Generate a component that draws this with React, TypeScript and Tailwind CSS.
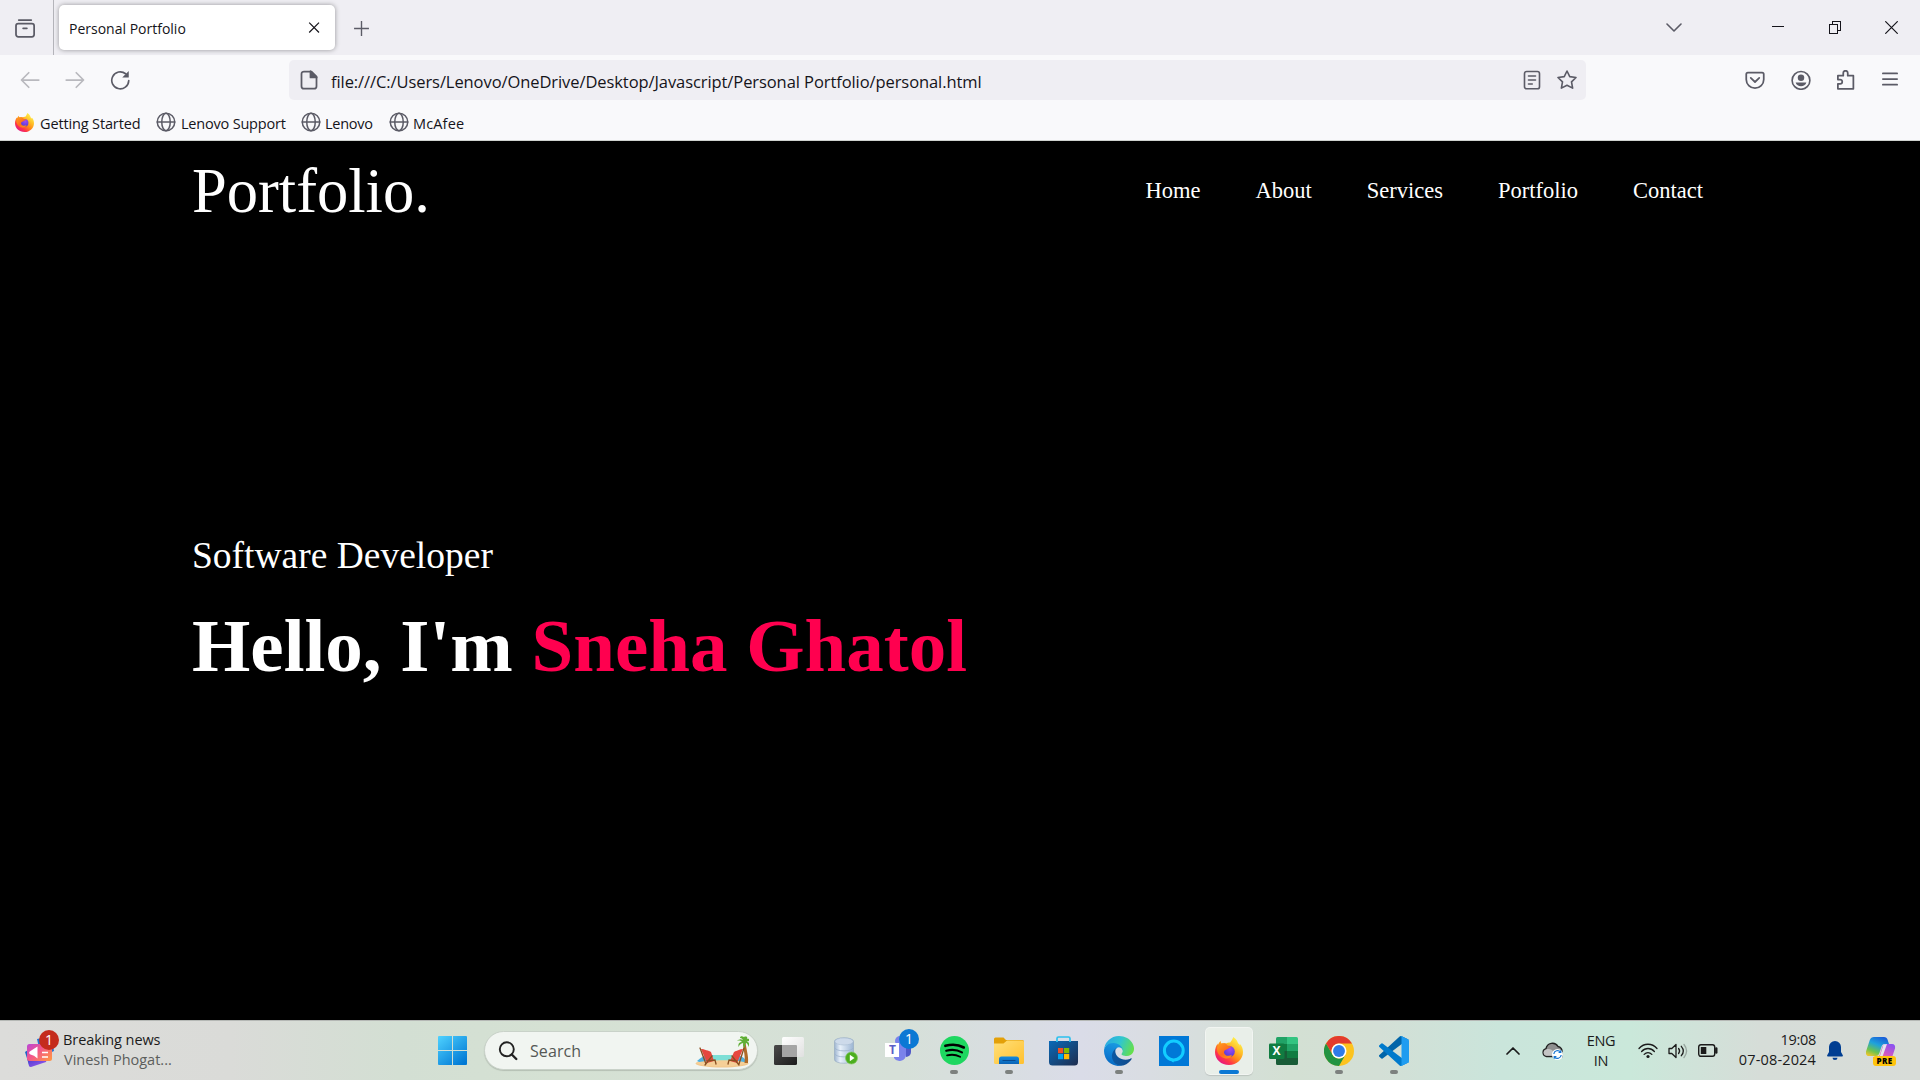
import type { ReactNode } from 'react';

type IconProps = { className?: string };

function Line({ className = '', children, w = 1.1 }: { className?: string; children: ReactNode; w?: number }) {
  return (
    <svg viewBox="0 0 16 16" fill="none" stroke="currentColor" strokeWidth={w} strokeLinecap="round" strokeLinejoin="round" className={`size-5 shrink-0 ${className}`}>
      {children}
    </svg>
  );
}

function Globe() {
  return (
    <Line w={1.2} className="text-[#5b5b66]">
      <circle cx="8" cy="8" r="7" />
      <ellipse cx="8" cy="8" rx="3.4" ry="7" />
      <path d="M1 8h14" />
    </Line>
  );
}

function Firefox({ className = '', id }: IconProps & { id: string }) {
  return (
    <svg viewBox="0 0 28 28" className={`shrink-0 ${className}`}>
      <defs>
        <linearGradient id={`${id}-o`} x1="0.85" y1="0.1" x2="0.2" y2="0.95">
          <stop offset="0" stopColor="#fff44f" />
          <stop offset="0.3" stopColor="#ffc02a" />
          <stop offset="0.55" stopColor="#ff8a16" />
          <stop offset="0.78" stopColor="#ff3647" />
          <stop offset="1" stopColor="#e31587" />
        </linearGradient>
        <linearGradient id={`${id}-f`} x1="0" y1="0" x2="0.8" y2="1">
          <stop offset="0" stopColor="#ffa01c" />
          <stop offset="0.6" stopColor="#ff6a1e" />
          <stop offset="1" stopColor="#ff8f1a" />
        </linearGradient>
        <radialGradient id={`${id}-p`} cx="0.6" cy="0.3" r="0.8">
          <stop offset="0" stopColor="#a44bf0" />
          <stop offset="0.6" stopColor="#6a3fe0" />
          <stop offset="1" stopColor="#4a3ec0" />
        </radialGradient>
      </defs>
      <path d="M18.2 0c3 1.8 4.3 4.3 4.9 6.5 1 .4 1.600 1.200 1.900 2 .2-.5.300-1 .300-1.500C27 9.500 28 12 28 15c0 7.200-6.200 13-14 13S0 22.400 0 15.200C0 11.300 1.300 8.500 2.600 6.500c0 .8.100 1.300.3 1.700C3.500 6.400 4.500 5 5.800 4c0 1 .1 2 .700 2.700 1.400-.6 3-.7 4.500-.300 1.500-.700 3-1.200 4.200-.900C16.300 4 17.700 2.300 18.200 0z" fill={`url(#${id}-o)`} />
      <circle cx="14" cy="14.500" r="5.800" fill={`url(#${id}-p)`} />
      <path d="M2.900 8.200 5.800 6.800c1.600-.600 3.500-.600 5.200 0 1 .900 1.700 2 2.500 2.400h2.700c0 1-1.300 1.800-3.100 2.300-.600.900-1.300 1-2.100 1.300-1.600.500-2.400 1.800-1.800 3.400.500 1.400 1.900 2.600 3.800 2.600 1.500 0 2.700-.700 4-.600-1.100 2.300-3.700 3.600-6.500 3.200C6.600 20.900 2.300 17.500 2 12.500c0-1.700.3-3.200.9-4.300z" fill={`url(#${id}-f)`} />
    </svg>
  );
}

function WindowsLogo() {
  return (
    <svg viewBox="0 0 29 29" className="size-[29px] shrink-0">
      <defs>
        <linearGradient id="win" gradientUnits="userSpaceOnUse" x1="0" y1="0" x2="24" y2="29">
          <stop offset="0" stopColor="#4fd2ff" />
          <stop offset="1" stopColor="#0078d4" />
        </linearGradient>
      </defs>
      <path fill="url(#win)" d="M1 0h13v14H0V1a1 1 0 0 1 1-1zM15 0h13a1 1 0 0 1 1 1v13H15zM0 15h14v14H1a1 1 0 0 1-1-1zM15 15h14v13a1 1 0 0 1-1 1H15z" />
    </svg>
  );
}

function NewsIcon() {
  return (
    <svg viewBox="0 0 34 37" className="h-[37px] w-[34px] shrink-0">
      <defs>
        <linearGradient id="news" x1="0" y1="0" x2="1" y2="0.8">
          <stop offset="0" stopColor="#b846d8" />
          <stop offset="0.45" stopColor="#f2558c" />
          <stop offset="1" stopColor="#ff9048" />
        </linearGradient>
        <linearGradient id="newsback" x1="0" y1="0" x2="1" y2="1">
          <stop offset="0" stopColor="#4a3bd0" />
          <stop offset="1" stopColor="#a45cf0" />
        </linearGradient>
      </defs>
      <path d="M12 8l14-3 3 15-13 6z" fill="#2472d4" />
      <path d="M0 21l3-2 4 14-3 1z" fill="#1e62c8" />
      <path d="M3 29l19-1-1 3L6 36a2 2 0 0 1-2-1z" fill="url(#newsback)" />
      <rect x="2" y="13" width="25" height="17" rx="2.500" fill="url(#news)" />
      <path d="M12.500 15.500v12L9 24.800l-3.500-1.300c-1.800-1-1.800-2.800 0-3.500z" fill="#fff" />
      <path d="M17 21.500h6M17 26h6" stroke="#fff" strokeWidth="1.600" />
    </svg>
  );
}

function BeachArt() {
  return (
    <svg viewBox="0 0 54 32" className="h-8 w-[54px] shrink-0">
      <ellipse cx="27" cy="27.500" rx="26.500" ry="4" fill="#f2c88e" />
      <path d="M2 25c4-4 8-6 13-6h25c5 0 9 2 12 7-7 2-12-1-25-1S8 28 2 25z" fill="#4fb0e0" />
      <path d="M18 19h20l3 6c-8 2-18 2-26 0z" fill="#7ddfd6" />
      <path d="M1 27c10-3 40-4 51 0-10 4.500-42 4.500-51 0z" fill="#f5cf97" />
      <path d="M48.500 6c-1 6 2 12 1 21h3.500c.8-8-2-14-2.500-21z" fill="#b06a28" />
      <path d="M50 6c-3-4-6-3-8-1 3-1 4 0 5 1-3 0-4 2-3.500 5 1.500-3 3-4 5-4-1 2 0 4 1.500 5 0-2 0-4 1-5 1 0 2 2 3 4 1-4-1-5-2-6 1 0 2 0 3 1 0-3-2-4-3-3 1-2-1-3-3-2-2-1-4-1-4 1 2 0 3 1 3 4z" fill="#5fae35" />
      <path d="M6 13c3 0 8 2 10 3l3 9-7 2z" fill="#e6473f" />
      <path d="M48 13c-3 0-7 2-9 3l-4 9 7 2z" fill="#e6473f" />
      <g fill="none" stroke="#8a4f20" strokeWidth="1.300" strokeLinecap="round">
        <path d="M5 12l6 16M12 25l8-1 1 4M17 20l-7 9" />
        <path d="M49 12l-5 16M42 25l-8-1-1 4M37 20l7 9" />
      </g>
    </svg>
  );
}

function TaskView() {
  return (
    <svg viewBox="0 0 30 28" className="h-7 w-[30px]">
      <defs>
        <linearGradient id="tvd" x1="0" y1="0" x2="1" y2="1"><stop offset="0" stopColor="#4a4a4a" /><stop offset="1" stopColor="#1c1c1c" /></linearGradient>
        <linearGradient id="tvl" x1="0" y1="0" x2="1" y2="1"><stop offset="0" stopColor="#fff" /><stop offset="1" stopColor="#e0e0e0" /></linearGradient>
      </defs>
      <rect x="0" y="8" width="23" height="20" rx="1.500" fill="url(#tvd)" />
      <rect x="8" y="0" width="22" height="20" rx="1.500" fill="url(#tvl)" />
      <path d="M8 8h14a1 1 0 0 1 1 1v11H9a1 1 0 0 1-1-1z" fill="#a5a5a5" />
    </svg>
  );
}

function Database() {
  return (
    <svg viewBox="0 0 24 28" className="h-7 w-6">
      <defs><linearGradient id="dbg" x1="0" x2="1" y1="0" y2="0"><stop offset="0" stopColor="#9db4d0" /><stop offset="0.3" stopColor="#e8f1fa" /><stop offset="1" stopColor="#9cb5d3" /></linearGradient></defs>
      <path d="M.5 4.500C.5-.5 19.500-.5 19.500 4.500v18c0 5-19 5-19 0z" fill="url(#dbg)" stroke="#93a8c0" strokeWidth=".6" />
      <ellipse cx="10" cy="4.500" rx="9.200" ry="3.500" fill="#cddaea" stroke="#a3b6cc" strokeWidth=".5" />
      <path d="M.5 10.500c1 4.500 18 4.500 19 0M.5 16.500c1 4.500 18 4.500 19 0" fill="none" stroke="#9db2cb" strokeWidth=".8" />
      <circle cx="17.500" cy="21" r="6" fill="#4cae1e" stroke="#7fc95a" strokeWidth=".7" />
      <path d="M15.800 17.800v6.400l4.700-3.200z" fill="#fff" />
    </svg>
  );
}

function Teams() {
  return (
    <span className="relative block h-8 w-[34px]">
      <svg viewBox="0 0 34 32" className="h-8 w-[34px]">
        <circle cx="22" cy="8" r="4" fill="#5059c9" />
        <path d="M19 13h7v9a5 5 0 0 1-5 5z" fill="#5059c9" />
        <circle cx="15" cy="11" r="5" fill="#7b83eb" />
        <path d="M9 15h12v10a6.500 6.500 0 0 1-12 3z" fill="#7b83eb" />
        <rect x="0" y="13" width="14" height="14" fill="#fff" />
      </svg>
      <span className="absolute left-0 top-[13px] w-[15px] text-center text-[12px] font-bold leading-[14px] text-[#5b5fc7]">T</span>
      <span className="absolute -top-[1px] left-[14px] flex size-5 items-center justify-center rounded-full bg-[#0b78d4] text-[14px] leading-none text-white">1</span>
    </span>
  );
}

function Spotify() {
  return (
    <svg viewBox="0 0 28 28" className="size-[29px]">
      <circle cx="14" cy="14" r="14" fill="#1ed760" />
      <g fill="none" stroke="#000" strokeLinecap="round">
        <path d="M5.200 9.500c6-1.700 12.800-1.200 17.800 1.600" strokeWidth="2.500" />
        <path d="M6 14.300c5.200-1.400 10.700-.9 15.200 1.500" strokeWidth="2.100" />
        <path d="M6.800 18.700c4.300-1.100 8.800-.7 12.600 1.300" strokeWidth="1.800" />
      </g>
    </svg>
  );
}

function Explorer() {
  return (
    <svg viewBox="0 0 30 27" className="h-[27px] w-[30px]">
      <defs>
        <linearGradient id="exf" x1="0" y1="0" x2="1" y2="1"><stop offset="0" stopColor="#ffe07a" /><stop offset="1" stopColor="#ffc02e" /></linearGradient>
        <linearGradient id="exb" x1="0" y1="0" x2="0" y2="1"><stop offset="0" stopColor="#128be0" /><stop offset="1" stopColor="#0a62b5" /></linearGradient>
      </defs>
      <path d="M0 2a1.500 1.500 0 0 1 1.500-1.500h8L12 3h16.500A1.500 1.500 0 0 1 30 4.500V10H0z" fill="#e3a008" />
      <path d="M0 6.500h9.500L13 3.500h15.500A1.500 1.500 0 0 1 30 5v20.500a1.500 1.500 0 0 1-1.500 1.500h-27A1.500 1.500 0 0 1 0 25.500z" fill="url(#exf)" />
      <path d="M5 27v-5a2.500 2.500 0 0 1 2.500-2.500h15A2.500 2.500 0 0 1 25 22v5z" fill="url(#exb)" />
      <path d="M9 23.500h12" stroke="#07498f" strokeWidth="1.200" strokeLinecap="round" />
    </svg>
  );
}

function Store() {
  return (
    <svg viewBox="0 0 29 30" className="h-[30px] w-[29px]">
      <defs><linearGradient id="stg" x1="0" y1="0" x2="1" y2="1"><stop offset="0" stopColor="#0a6ab8" /><stop offset="1" stopColor="#1e2c4e" /></linearGradient></defs>
      <path d="M0 5h29v21a3.500 3.500 0 0 1-3.500 3.500h-22A3.500 3.500 0 0 1 0 26z" fill="url(#stg)" />
      <path d="M8 6V2.500A1.500 1.500 0 0 1 9.500 1h10A1.500 1.500 0 0 1 21 2.500V6" fill="none" stroke="#2cc0ee" strokeWidth="1.700" />
      <path d="M9 12h5.200v5.200H9z" fill="#f25022" /><path d="M15 12h5.200v5.200H15z" fill="#7fba00" />
      <path d="M9 18h5.200v5.200H9z" fill="#00a4ef" /><path d="M15 18h5.200v5.200H15z" fill="#ffb900" />
    </svg>
  );
}

function Edge() {
  return (
    <svg viewBox="0 0 256 256" className="size-[30px]">
      <defs>
        <linearGradient id="ed1" x1="0" y1="0.5" x2="1" y2="0.5"><stop offset="0" stopColor="#0c59a4" /><stop offset="1" stopColor="#114a8b" /></linearGradient>
        <linearGradient id="ed2" x1="0.6" y1="0" x2="0.3" y2="1"><stop offset="0" stopColor="#1b9de2" /><stop offset="0.6" stopColor="#0f7cd3" /><stop offset="1" stopColor="#0667c0" /></linearGradient>
        <linearGradient id="ed3" x1="0" y1="0.3" x2="1" y2="0.6"><stop offset="0" stopColor="#2aa8e4" /><stop offset="0.5" stopColor="#30c6cf" /><stop offset="1" stopColor="#66e04a" /></linearGradient>
      </defs>
      <path fill="url(#ed1)" d="M231 190.500c-3.400 1.800-6.900 3.300-10.500 4.700a101.900 101.900 0 0 1-35.900 6.400c-47.300 0-88.500-32.500-88.500-74.300a31.500 31.500 0 0 1 16.400-27.300c-42.800 1.800-53.800 46.400-53.800 72.500 0 74 68.100 81.400 82.800 81.400 7.900 0 19.800-2.300 27-4.600l1.300-.4a128.300 128.300 0 0 0 66.600-52.800 4 4 0 0 0-5.400-5.600z" />
      <path fill="url(#ed2)" d="M105.700 241.400A79.200 79.200 0 0 1 83 220.100a80.700 80.700 0 0 1 29.500-120c3.200-1.500 8.500-4.100 15.600-4a32.400 32.400 0 0 1 25.700 13 31.900 31.900 0 0 1 6.300 18.700c0-.200 24.500-79.600-80-79.600-43.900 0-80 41.700-80 78.200a130.200 130.200 0 0 0 12.100 56 128 128 0 0 0 156.400 67 75.500 75.500 0 0 1-62.800-8z" />
      <path fill="url(#ed3)" d="M152.300 148.900c-.9 1-3.400 2.500-3.400 5.600 0 2.600 1.700 5.200 4.800 7.300 14.400 10.100 41.600 8.700 41.700 8.700a59.600 59.600 0 0 0 30.300-8.300 61.400 61.400 0 0 0 30.400-52.900c.3-22.400-8-37.300-11.300-43.900C223.500 23.900 177.700 0 128 0A128 128 0 0 0 0 126.200c.5-36.500 36.800-66 80-66 3.500 0 23.500.3 42 10.100 16.300 8.600 24.900 18.900 30.800 29.200 6.200 10.700 7.300 24.100 7.300 29.500 0 5.300-2.700 13.300-7.800 19.900z" />
    </svg>
  );
}

function Alexa() {
  return (
    <svg viewBox="0 0 30 30" className="size-[30px]">
      <rect width="30" height="30" fill="#0078d7" />
      <circle cx="14.800" cy="14.500" r="9.400" fill="none" stroke="#12cdff" strokeWidth="3" />
      <path d="M12 23h3.200c0 1.200-.3 2.300-.8 3.500-1.400-.5-2.400-1.500-2.400-3.500z" fill="#12cdff" />
    </svg>
  );
}

function Excel() {
  return (
    <span className="relative block h-7 w-[29px]">
      <svg viewBox="0 0 29 28" className="h-7 w-[29px]">
        <path d="M8.500 0H18v7H7V1.500A1.500 1.500 0 0 1 8.500 0z" fill="#21a366" />
        <path d="M18 0h9.500A1.500 1.500 0 0 1 29 1.500V7H18z" fill="#33c481" />
        <path d="M7 7h11v7H7z" fill="#107c41" /><path d="M18 7h11v7H18z" fill="#21a366" />
        <path d="M7 14h11v7H7z" fill="#185c37" /><path d="M18 14h11v7H18z" fill="#107c41" />
        <path d="M7 21h22v5.500a1.500 1.500 0 0 1-1.500 1.500h-19A1.500 1.500 0 0 1 7 26.500z" fill="#185c37" />
        <rect x="0" y="6.500" width="15.500" height="15.500" rx="1.300" fill="#107c41" />
      </svg>
      <span className="absolute left-0 top-[7px] w-[15px] text-center text-[12px] font-bold leading-[14px] text-white">X</span>
    </span>
  );
}

function Chrome() {
  return (
    <svg viewBox="0 0 48 48" className="size-[30px]">
      <circle cx="24" cy="24" r="24" fill="#fcc31e" />
      <path d="M3.200 12A24 24 0 0 1 44.800 12H24a12 12 0 0 0-10.400 18z" fill="#e33b2e" />
      <path d="M3.200 12A24 24 0 0 0 24 48l10.400-18A12 12 0 0 1 13.600 30z" fill="#229342" />
      <circle cx="24" cy="24" r="12" fill="#fff" />
      <circle cx="24" cy="24" r="9.500" fill="#2f7be8" />
    </svg>
  );
}

function VsCode() {
  return (
    <svg viewBox="0 0 100 100" className="size-[30px]">
      <path d="M96.500 10.600 75.900.7a6.200 6.200 0 0 0-7.100 1.200L1.300 63.400a4.200 4.200 0 0 0 0 6.100l5.500 5c1.500 1.400 3.700 1.500 5.300.3L93.500 13.200c2.700-2.100 6.600-.100 6.600 3.300v-.200c0-2.500-1.400-4.700-3.600-5.700z" fill="#0065a9" />
      <path d="M96.500 89.400 75.900 99.300a6.200 6.200 0 0 1-7.100-1.200L1.300 36.600a4.200 4.200 0 0 1 0-6.100l5.500-5a4.200 4.200 0 0 1 5.300-.3l81.400 61.600c2.700 2.100 6.600.1 6.600-3.300v.200c0 2.500-1.400 4.700-3.600 5.700z" fill="#007acc" />
      <path d="M75.900 99.300a6.200 6.200 0 0 1-7.100-1.200c2.300 2.300 6.200.7 6.200-2.600V4.500c0-3.300-3.900-4.900-6.200-2.600A6.200 6.200 0 0 1 75.900.7l20.600 9.900a6.200 6.200 0 0 1 3.500 5.600v67.600c0 2.400-1.400 4.600-3.500 5.600z" fill="#1f9cf0" />
    </svg>
  );
}

function Copilot() {
  return (
    <span className="relative block h-[30px] w-[31px] shrink-0">
      <svg viewBox="0 0 31 30" className="h-[30px] w-[31px]">
        <defs>
          <linearGradient id="cpa" x1="0.7" y1="0" x2="0.2" y2="1"><stop offset="0" stopColor="#1a5fd8" /><stop offset="0.4" stopColor="#1ea2dc" /><stop offset="0.75" stopColor="#6cc34e" /><stop offset="1" stopColor="#e8c52c" /></linearGradient>
          <linearGradient id="cpb" x1="0.8" y1="0" x2="0.2" y2="1"><stop offset="0" stopColor="#8a52f0" /><stop offset="0.5" stopColor="#d158c4" /><stop offset="1" stopColor="#ff8a5a" /></linearGradient>
        </defs>
        <path d="M8 1h10c2 0 3 1 3.500 2.500L23 8h-4c-2 0-3 1-3.600 3l-2 6c-.6 2-1.500 3-3.400 3H3c-2.500 0-3.600-2-3-4.500L3.800 4C4.500 2 6 1 8 1z" fill="url(#cpa)" />
        <path d="M20 8h6c2.500 0 3.600 2 3 4.500L25.500 23c-.6 2-2 3-4 3H11c-2 0-3-1-3.500-3l-.5-2h3.500c2 0 3-1 3.600-3l2.200-7C17 9 18 8 20 8z" fill="url(#cpb)" />
        <path d="M17.500 8.500 21 8l-5 14-5 .5c2-.7 2.600-1.500 3.100-3z" fill="#e6e6ee" />
      </svg>
      <span className="absolute left-[7px] top-[20px] flex h-[10px] w-[23px] items-center justify-center rounded-[3px] bg-[#ffc40d] text-[8px] font-extrabold leading-none tracking-[0.4px] text-black">PRE</span>
    </span>
  );
}

function AppSlot({ children, running = false, active = false }: { children: ReactNode; running?: boolean; active?: boolean }) {
  return (
    <div className="relative flex h-full w-[55px] items-center justify-center">
      {active ? <div className="flex size-12 items-center justify-center rounded-[5px] border border-white/40 bg-[#e9efe9] shadow-[0_1px_1px_rgba(0,0,0,0.12)]">{children}</div> : children}
      {running && <span className="absolute bottom-[6px] left-6 h-1 w-2 rounded-full bg-[#7d817f]" />}
      {active && <span className="absolute bottom-[6px] left-[18px] h-1 w-5 rounded-full bg-[#0b78d4]" />}
    </div>
  );
}

function TabBar() {
  return (
    <div className="flex h-[55px] bg-[#efeef3] text-[#5b5b66]">
      <div className="flex w-[54px] items-center border-r border-[#b4b4ba] pl-[15px]">
        <Line w={1.4} className="mt-[1px]">
          <rect x=".8" y="4.400" width="14.500" height="10.600" rx="1.800" />
          <path d="M3 1.600h10M6.500 8.200h3" />
        </Line>
      </div>
      <div className="ml-[5px] mt-[5px] flex h-[45px] w-[276px] items-center rounded-[5px] bg-white pl-[10px] pr-[13px] text-[#15141a] shadow-[0_0_5px_rgba(0,0,0,0.38)]">
        <span className="flex-1 pt-[2px] text-[14px] leading-5">Personal Portfolio</span>
        <svg viewBox="0 0 16 16" className="size-4" fill="none" stroke="currentColor" strokeWidth="1.200"><path d="M3.200 2.700l9.800 9.800M13 2.700l-9.800 9.800" /></svg>
      </div>
      <svg viewBox="0 0 16 16" className="ml-[18px] mt-[20px] size-[17px]" fill="none" stroke="currentColor" strokeWidth="1.300"><path d="M8 1v14M1 8h14" /></svg>
      <div className="ml-auto flex h-[55px] items-center text-[#15141a]">
        <svg viewBox="0 0 16 9" className="h-[9px] w-4 text-[#5b5b66]" fill="none" stroke="currentColor" strokeWidth="1.600" strokeLinecap="round" strokeLinejoin="round"><path d="M1 1l7 7 7-7" /></svg>
        <svg viewBox="0 0 12 13" className="ml-[90px] h-[13px] w-3" fill="none" stroke="currentColor" shapeRendering="crispEdges"><path d="M0 5.500h12" /></svg>
        <svg viewBox="0 0 13 13" className="ml-[45px] size-[13px]" fill="none" stroke="currentColor" shapeRendering="crispEdges"><path d="M.5 3.500h8v9h-8zM3.500 3V.5h8v9H9" /></svg>
        <svg viewBox="0 0 13 13" className="ml-[43px] mr-[22px] size-[13px]" fill="none" stroke="currentColor" strokeWidth="1.200"><path d="M.3.300l12.400 12.400M12.700.3L.3 12.700" /></svg>
      </div>
    </div>
  );
}

function NavBar() {
  return (
    <div className="flex h-[50px] items-center bg-[#f9f9fb] text-[#5b5b66]">
      <Line className="ml-5 text-[#b9b9be]" w={1.4}><path d="M15 8H1.500M7 2.200L1.200 8 7 13.800" /></Line>
      <Line className="ml-[25px] text-[#b9b9be]" w={1.4}><path d="M1 8h13.500M9 2.200L14.800 8 9 13.800" /></Line>
      <Line className="ml-[25px]" w={1.3}>
        <path d="M15 8.500A6.800 6.800 0 1 1 12.500 3" />
        <path d="M15 .8v5.200H9.800z" fill="currentColor" stroke="none" />
      </Line>
      <div className="ml-[159px] flex h-10 w-[1297px] items-center rounded-[5px] bg-[#efeef3] pl-[10px] pr-[9px]">
        <Line w={1.4}>
          <path d="M4 1.200h6l4 4v7.700a2 2 0 0 1-2 2H4a2 2 0 0 1-2-2V3.200a2 2 0 0 1 2-2z" />
          <path d="M9.200 1v4.900h4.900z" fill="currentColor" />
        </Line>
        <span className="ml-3 flex-1 pt-[3px] text-[16.5px] leading-5 tracking-[-0.08px] text-[#15141a]">file:///C:/Users/Lenovo/OneDrive/Desktop/Javascript/Personal Portfolio/personal.html</span>
        <Line w={1.3}>
          <rect x="2" y="1.200" width="12" height="13.800" rx="1.700" />
          <path d="M5.200 4.800h5.600M5.200 8h5.600M5.200 11.200h3" />
        </Line>
        <Line className="ml-[15px]" w={1.3}>
          <path d="M8 .800l2.200 4.500 5 .7-3.600 3.500.9 5L8 12.200l-4.500 2.300.9-5L.8 6l5-.7z" />
        </Line>
      </div>
      <Line className="ml-[159px]" w={1.4}>
        <path d="M2.300 2h11.400c.8 0 1.300.5 1.300 1.300V7.500a7 7 0 0 1-14 0V3.300C1 2.500 1.500 2 2.300 2z" />
        <path d="M4.600 6.300L8 9.600l3.400-3.300" />
      </Line>
      <Line className="ml-[26px]" w={1.3}>
        <circle cx="8" cy="8.300" r="7.100" />
        <circle cx="8" cy="6.200" r="2.600" fill="currentColor" stroke="none" />
        <path d="M3.700 10h8.600c-.6 2-2.300 3-4.300 3s-3.700-1-4.300-3z" fill="currentColor" stroke="none" />
      </Line>
      <Line className="ml-[25px]" w={1.4}>
        <path d="M1.500 15v-4h1.800a1.700 1.700 0 0 0 0-3.400H1.500V4.500h4.300V2.400a1.800 1.800 0 0 1 3.600 0v2.100h4.500V15z" />
      </Line>
      <Line className="ml-[24px]" w={1.4}><path d="M2.300 2.700h11.400M2.300 7.200h11.400M2.300 11.700h11.400" /></Line>
    </div>
  );
}

function Bookmarks() {
  return (
    <div className="flex h-9 items-center border-b border-[#cfd2cf] bg-[#f9f9fb] pb-[1px] pl-[15px] text-[14.5px] leading-5 text-[#15141a]">
      <Firefox id="bm" className="size-[19px]" />
      <span className="ml-[6px] w-[117px] pt-[3px] tracking-[-0.14px]">Getting Started</span>
      <span className="-ml-[1px]"><Globe /></span>
      <span className="ml-[5px] w-30 pt-[3px] tracking-[-0.2px]">Lenovo Support</span>
      <Globe />
      <span className="ml-1 w-16 pt-[3px] tracking-[-0.25px]">Lenovo</span>
      <Globe />
      <span className="ml-1 pt-[3px] tracking-[0.15px]">McAfee</span>
    </div>
  );
}

function PortfolioPage() {
  return (
    <main className="flex h-[879px] flex-col bg-black px-48 font-['Liberation_Serif',serif] text-white">
      <header className="flex h-[98px] items-center justify-between">
        <span className="pt-[1px] text-[62.5px] leading-[70px]">Portfolio.</span>
        <nav className="flex gap-[55px] pr-[25px] pt-[2px] text-[22.5px] leading-[26px]">
          <a>Home</a>
          <a>About</a>
          <a>Services</a>
          <a>Portfolio</a>
          <a>Contact</a>
        </nav>
      </header>
      <section className="mt-[295px]">
        <p className="text-[37.5px] leading-[44px]">Software Developer</p>
        <h1 className="mt-[24px] text-[75px] font-bold leading-[88px]">
          Hello, I'm <span className="text-[#ff004f]">Sneha Ghatol</span>
        </h1>
      </section>
    </main>
  );
}

function Taskbar() {
  return (
    <footer className="flex h-[60px] items-center border-t border-[#b5b8b5] bg-[linear-gradient(90deg,#dcdcda_0,#dadbd8_230px,#d3dfd3_400px,#d5e1d3_560px,#d6e0d8_900px,#dadce8_1080px,#d9dde2_1150px,#d3e0d3_1290px,#d3dfd6_1380px,#cae5db_1500px,#cae8da_1630px,#d6ddd8_1760px,#d8dcd8_1920px)] text-[14.5px] leading-5 text-[#1b1b1b]">
      <div className="relative ml-[25px] mb-[3px]">
        <NewsIcon />
        <span className="absolute -top-[1px] left-[14px] flex size-5 items-center justify-center rounded-full bg-[#c42b1c] text-[14px] leading-none text-white">1</span>
      </div>
      <div className="ml-[3px] w-[376px] pb-[2px] pl-[1px]">
        <div className="tracking-[-0.08px]">Breaking news</div>
        <div className="pl-[1px] text-[#5c5e5c]">Vinesh Phogat...</div>
      </div>
      <WindowsLogo />
      <div className="ml-[17px] flex h-[39px] w-[274px] items-center rounded-full border border-[#c9d2c9] bg-[#f1f5f1] pl-[13px] pr-[8px] shadow-[0_1px_1px_rgba(0,0,0,0.15)]">
        <svg viewBox="0 0 20 20" className="size-5" fill="none" stroke="#222" strokeWidth="1.900" strokeLinecap="round"><circle cx="8.800" cy="8.300" r="7" /><path d="M13.800 13.500l4.500 4.500" strokeWidth="2.400" /></svg>
        <span className="ml-3 flex-1 text-[16px] tracking-[0.1px] text-[#555855]">Search</span>
        <span className="mt-[2px]"><BeachArt /></span>
      </div>
      <div className="ml-[3px] flex h-full">
        <AppSlot><TaskView /></AppSlot>
        <AppSlot><span className="ml-1"><Database /></span></AppSlot>
        <AppSlot><span className="-mt-[9px] ml-[7px]"><Teams /></span></AppSlot>
        <AppSlot running><span className="ml-[1px]"><Spotify /></span></AppSlot>
        <AppSlot running><Explorer /></AppSlot>
        <AppSlot><Store /></AppSlot>
        <AppSlot running><Edge /></AppSlot>
        <AppSlot><Alexa /></AppSlot>
        <AppSlot active><Firefox id="tb" className="size-7" /></AppSlot>
        <AppSlot><Excel /></AppSlot>
        <AppSlot running><Chrome /></AppSlot>
        <AppSlot running><VsCode /></AppSlot>
      </div>
      <div className="ml-auto flex items-center">
        <svg viewBox="0 0 14 8" className="h-2 w-[14px]" fill="none" stroke="currentColor" strokeWidth="1.700" strokeLinecap="round" strokeLinejoin="round"><path d="M1 7l6-6 6 6" /></svg>
        <svg viewBox="0 0 22 18" className="ml-[22px] mt-[1px] h-[18px] w-[22px]">
          <path d="M4.500 14.500a4 4 0 0 1-.5-7.800A6.500 6.500 0 0 1 16 4.500a4.800 4.800 0 0 1 4 5.500v4.500z" fill="#8f8f8f" stroke="#222" strokeWidth="1.400" />
          <path d="M2 9c3-3 7-2 9 0l5 4.800H4.500C2 13.500 1 11 2 9z" fill="#c4c4c4" />
          <circle cx="15.500" cy="12.500" r="5.500" fill="#fff" />
          <path d="M11.800 12a3.800 3.800 0 0 1 6.700-2M19.200 13a3.800 3.800 0 0 1-6.700 2M18.800 8.200v2.300h-2.200M12.200 16.800v-2.300h2.200" fill="none" stroke="#1976d2" strokeWidth="1.200" />
        </svg>
        <div className="ml-[19px] w-9 text-center tracking-[-0.3px]">
          <div>ENG</div>
          <div>IN</div>
        </div>
        <svg viewBox="0 0 20 16" className="ml-[19px] h-4 w-5" fill="none" stroke="currentColor" strokeWidth="1.300" strokeLinecap="round">
          <path d="M1 5.500C6-.2 14-.2 19 5.500M3.600 8.500c3.600-4 9.200-4 12.800 0M6.200 11.400c2.200-2.400 5.400-2.400 7.600 0" />
          <circle cx="10" cy="13.500" r="1.600" fill="currentColor" stroke="none" />
        </svg>
        <svg viewBox="0 0 20 16" className="ml-[10px] h-4 w-5" fill="none" stroke="currentColor" strokeWidth="1.300" strokeLinecap="round" strokeLinejoin="round">
          <path d="M1 5.500h2.800L8 1.500v13l-4.200-4H1z" /><path d="M10.600 5.500c1.200 1.500 1.200 3.500 0 5M13.300 3.300c2.400 2.800 2.400 6.600 0 9.400" /><path d="M16 1.500c3.200 4 3.200 9 0 13" opacity=".3" />
        </svg>
        <svg viewBox="0 0 20 13" className="ml-[10px] h-[13px] w-5" fill="none" stroke="currentColor" strokeWidth="1.400">
          <rect x=".7" y=".7" width="16" height="11.600" rx="2.200" /><rect x="2.800" y="3" width="5.500" height="7" fill="currentColor" stroke="none" /><path d="M18.300 4.500v4" strokeWidth="2.400" strokeLinecap="round" />
        </svg>
        <div className="ml-[18px] w-20 pb-[2px] text-right">
          <div className="tracking-[-0.3px]">19:08</div>
          <div className="tracking-[0.15px]">07-08-2024</div>
        </div>
        <svg viewBox="0 0 16 19" className="ml-[11px] h-[19px] w-4" fill="#003e92"><path d="M8 0a6 6 0 0 1 6 6v5l1.800 3.300c.3.700 0 1.200-.7 1.200H.9c-.7 0-1-.5-.7-1.200L2 11V6a6 6 0 0 1 6-6zM5.500 16.800h5a2.500 2.200 0 0 1-5 0z" /></svg>
        <div className="ml-[23px] mr-[23px] mt-[1px]"><Copilot /></div>
      </div>
    </footer>
  );
}

export default function App() {
  return (
    <div className="h-[1080px] w-[1920px] overflow-hidden bg-black font-['Open_Sans','Noto_Sans',sans-serif]">
      <TabBar />
      <NavBar />
      <Bookmarks />
      <PortfolioPage />
      <Taskbar />
    </div>
  );
}
